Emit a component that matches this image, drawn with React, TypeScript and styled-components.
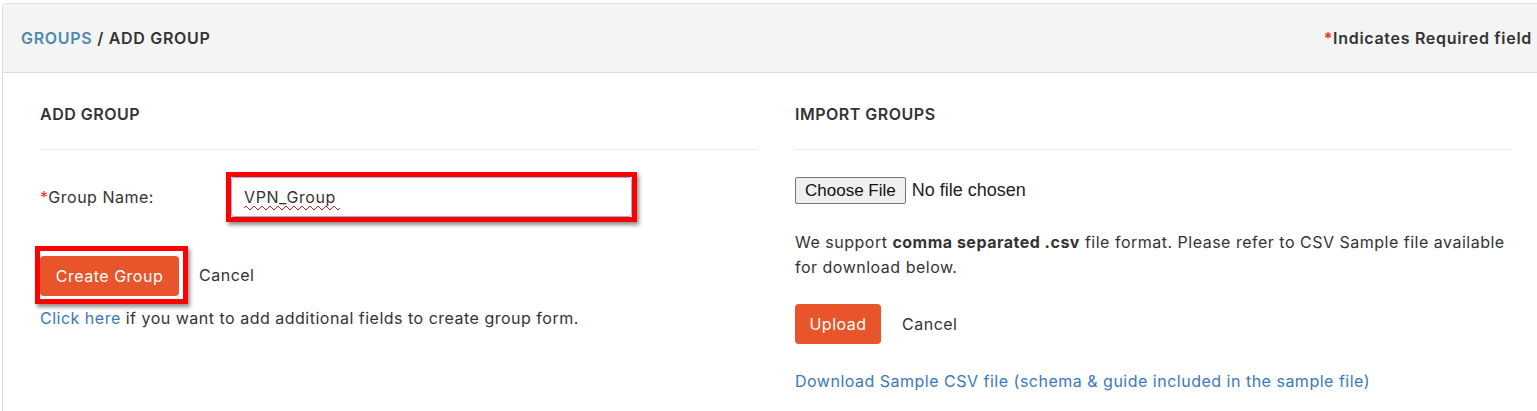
import React from 'react';
import styled, { createGlobalStyle } from 'styled-components';

const GlobalStyle = createGlobalStyle`
  html, body {
    margin: 0;
    padding: 0;
    background: #ffffff;
    font-family: Inter, "Noto Sans", sans-serif;
    letter-spacing: 0.5px;
    color: #333333;
  }
`;

const ORANGE = '#e9552b';
const LINK = '#3a79b9';

const Page = styled.div`
  width: 1537px;
  height: 411px;
  overflow: hidden;
  padding: 3px 0 0 2px;
  box-sizing: border-box;
`;

const Panel = styled.div`
  width: 1560px;
  height: 440px;
  border: 1px solid #dddddd;
  border-radius: 4px 0 0 0;
  box-sizing: border-box;
`;

const Header = styled.div`
  height: 68px;
  background: #f4f4f4;
  border-bottom: 1px solid #dddddd;
  display: flex;
  align-items: center;
  justify-content: space-between;
  padding: 0 29px 0 18px;
  font-size: 16px;
  font-weight: 600;
  letter-spacing: 0.7px;
  color: #333333;
`;

const Crumb = styled.span`
  color: #4d8aab;
`;

const Required = styled.span`
  color: #ff2a1a;
`;

const Body = styled.div`
  display: grid;
  grid-template-columns: 717px 717px;
  column-gap: 38px;
  padding-left: 37px;
`;

const Column = styled.section`
  display: flex;
  flex-direction: column;
  align-items: flex-start;
`;

const SectionTitle = styled.h2`
  align-self: stretch;
  margin: 0;
  padding: 31px 0 25px;
  font-size: 16px;
  line-height: 20px;
  font-weight: 600;
  color: #333333;
  border-bottom: 1px solid #ebebeb;
`;

const FormRow = styled.div`
  display: flex;
  align-items: center;
  margin-top: 22px;
`;

const Label = styled.label`
  width: 186px;
  font-size: 16px;
  color: #333333;
`;

const Highlight = styled.div<{ $pad: string; $shift?: number }>`
  display: inline-flex;
  position: relative;
  margin-left: ${({ $shift }) => $shift ?? 0}px;
  border: 5px solid #ff0000;
  padding: ${({ $pad }) => $pad};
  box-shadow: 2px 3px 4px rgba(0, 0, 0, 0.45);
`;

const TextInput = styled.input`
  width: 401px;
  height: 40px;
  box-sizing: border-box;
  border: 1px solid #8fb8dc;
  border-radius: 3px;
  padding: 0 12px;
  font-family: Inter, "Noto Sans", sans-serif;
  font-size: 16px;
  letter-spacing: 0.6px;
  color: #333333;
  outline: none;
`;

const Squiggle = styled.svg`
  position: absolute;
  left: 13px;
  top: 29px;
  pointer-events: none;
`;

const ButtonRow = styled.div<{ $gap: number; $top: number }>`
  display: flex;
  align-items: center;
  gap: ${({ $gap }) => $gap}px;
  margin-top: ${({ $top }) => $top}px;
`;

const PrimaryButton = styled.button<{ $width: number }>`
  width: ${({ $width }) => $width}px;
  height: 40px;
  border: none;
  border-radius: 4px;
  background: ${ORANGE};
  color: #ffffff;
  font-family: Inter, "Noto Sans", sans-serif;
  font-size: 16px;
  letter-spacing: 0.5px;
  cursor: pointer;
`;

const CancelLink = styled.a`
  font-size: 16px;
  color: #333333;
  cursor: pointer;
`;

const Note = styled.p<{ $top: number }>`
  margin: ${({ $top }) => $top}px 0 0;
  font-size: 16px;
  line-height: 24px;
  color: #333333;
`;

const Link = styled.a`
  color: ${LINK};
  text-decoration: none;
  cursor: pointer;
`;

const FileInput = styled.input`
  margin-top: 27px;
  font-family: "Liberation Sans", Arial, sans-serif;
  font-size: 18px;
  letter-spacing: 0;
  color: #222222;

  &::file-selector-button {
    font-family: "Liberation Sans", Arial, sans-serif;
    font-size: 17px;
    height: 27px;
    padding: 0 9px;
    margin-right: 6px;
    border: 1px solid #767676;
    border-radius: 2px;
    background: #efefef;
    color: #111111;
  }
`;

const Info = styled.p`
  margin: 26px 0 0;
  font-size: 16px;
  line-height: 25px;
  color: #333333;
`;

function SpellMark({ width }: { width: number }) {
  const steps = Math.floor(width / 4);
  let d = 'M0 2';
  for (let i = 0; i < steps; i++) {
    d += ` L${i * 4 + 2} ${i % 2 === 0 ? 0 : 4} L${i * 4 + 4} 2`;
  }
  return (
    <Squiggle width={width} height={4} viewBox={`0 0 ${width} 4`}>
      <path d={d} fill="none" stroke="#e02020" strokeWidth="1" />
    </Squiggle>
  );
}

export default function App() {
  return (
    <Page>
      <GlobalStyle />
      <Panel>
        <Header>
          <div>
            <Crumb>GROUPS</Crumb> / ADD GROUP
          </div>
          <div>
            <Required>*</Required>Indicates Required field
          </div>
        </Header>
        <Body>
          <Column>
            <SectionTitle>ADD GROUP</SectionTitle>
            <FormRow>
              <Label>
                <Required>*</Required>Group Name:
              </Label>
              <Highlight $pad="0">
                <TextInput defaultValue="VPN_Group" />
                <SpellMark width={96} />
              </Highlight>
            </FormRow>
            <ButtonRow $gap={11} $top={24}>
              <Highlight $pad="5px 4px 3px 0" $shift={-5}>
                <PrimaryButton $width={139}>Create Group</PrimaryButton>
              </Highlight>
              <CancelLink>Cancel</CancelLink>
            </ButtonRow>
            <Note $top={2}>
              <Link>Click here</Link> if you want to add additional fields to create group form.
            </Note>
          </Column>
          <Column>
            <SectionTitle>IMPORT GROUPS</SectionTitle>
            <FileInput type="file" accept=".csv" />
            <Info>
              We support <strong>comma separated .csv</strong> file format. Please refer to CSV Sample file available
              for download below.
            </Info>
            <ButtonRow $gap={21} $top={24}>
              <PrimaryButton $width={86}>Upload</PrimaryButton>
              <CancelLink>Cancel</CancelLink>
            </ButtonRow>
            <Note $top={25}>
              <Link>Download Sample CSV file (schema &amp; guide included in the sample file)</Link>
            </Note>
          </Column>
        </Body>
      </Panel>
    </Page>
  );
}
